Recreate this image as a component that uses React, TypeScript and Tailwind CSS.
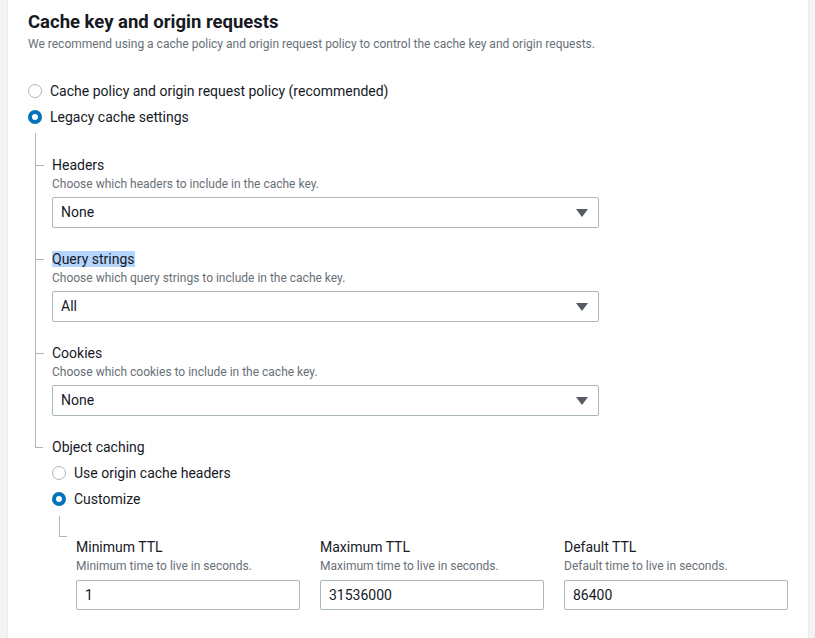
import React from 'react';

const font = { fontFamily: 'Roboto, "Liberation Sans", sans-serif' };

function Radio({ checked, label }: { checked?: boolean; label: string }) {
  return (
    <label className="flex items-center gap-2 h-5 text-[14px] text-[#16191f]">
      <span
        className={
          checked
            ? 'block w-[14px] h-[14px] rounded-full border-[4px] border-[#0073bb] bg-white'
            : 'block w-[14px] h-[14px] rounded-full border-[1.5px] border-[#aab7b8] bg-white'
        }
      />
      <span>{label}</span>
    </label>
  );
}

function Select({ value }: { value: string }) {
  return (
    <div className="mt-[5px] w-[547px] h-[31px] border border-[#aab7b8] rounded-[2px] flex items-center justify-between pl-2 pr-[10px] text-[14px] text-[#16191f]">
      <span>{value}</span>
      <svg width="12" height="8" viewBox="0 0 12 8">
        <path d="M0 0 H12 L6 8 Z" fill="#545b64" />
      </svg>
    </div>
  );
}

function TreeItem({
  label,
  desc,
  value,
  highlight,
}: {
  label: string;
  desc: string;
  value: string;
  highlight?: boolean;
}) {
  return (
    <div className="flex">
      <div className="w-[17px] border-l border-[#aab7b8] shrink-0">
        <div className="h-[10px]" />
        <div className="w-[8px] border-t border-[#aab7b8]" />
      </div>
      <div className="pb-[21px]">
        <div className="leading-5 text-[14px] text-[#16191f]">
          <span className={highlight ? 'bg-[#b4d5fe]' : ''}>{label}</span>
        </div>
        <div className="mt-px leading-4 text-[12px] text-[#687078]">{desc}</div>
        <Select value={value} />
      </div>
    </div>
  );
}

function TtlField({ label, desc, value }: { label: string; desc: string; value: string }) {
  return (
    <div>
      <div className="leading-5 text-[14px] text-[#16191f]">{label}</div>
      <div className="mt-px leading-4 text-[12px] text-[#687078]">{desc}</div>
      <div className="mt-[6px] h-[30px] border border-[#aab7b8] rounded-[2px] flex items-center pl-2 text-[14px] text-[#16191f]">
        {value}
      </div>
    </div>
  );
}

export default function App() {
  return (
    <div className="min-h-[638px] bg-[#f2f3f3] pl-[7px]" style={font}>
      <div className="w-[802px] min-h-[638px] bg-white border-l border-r border-[#eaeded] pl-[20px] pt-[11px]">
        <h2 className="text-[18.5px] leading-[22px] font-bold text-[#16191f]">Cache key and origin requests</h2>
        <p className="mt-[3px] text-[12px] leading-4 text-[#687078]">
          We recommend using a cache policy and origin request policy to control the cache key and origin requests.
        </p>

        <div className="mt-[29px] flex flex-col gap-[6px]">
          <Radio label="Cache policy and origin request policy (recommended)" />
          <Radio checked label="Legacy cache settings" />
        </div>

        <div className="ml-[7px] mt-[6px]">
          <div className="h-[22px] border-l border-[#aab7b8]" />
          <TreeItem label="Headers" desc="Choose which headers to include in the cache key." value="None" />
          <TreeItem
            label="Query strings"
            desc="Choose which query strings to include in the cache key."
            value="All"
            highlight
          />
          <TreeItem label="Cookies" desc="Choose which cookies to include in the cache key." value="None" />

          <div className="flex">
            <div className="w-[17px] shrink-0">
              <div className="h-[11px] w-[8px] border-l border-b border-[#aab7b8]" />
            </div>
            <div>
              <div className="leading-5 text-[14px] text-[#16191f]">Object caching</div>
              <div className="mt-[6px] flex flex-col gap-[6px]">
                <Radio label="Use origin cache headers" />
                <Radio checked label="Customize" />
              </div>
              <div className="ml-[7px] mt-[7px] flex">
                <div className="w-[17px] shrink-0">
                  <div className="h-[21px] w-[8px] border-l border-b border-[#aab7b8]" />
                </div>
                <div className="pt-[21px] grid grid-cols-[224px_224px_224px] gap-x-5">
                  <TtlField label="Minimum TTL" desc="Minimum time to live in seconds." value="1" />
                  <TtlField label="Maximum TTL" desc="Maximum time to live in seconds." value="31536000" />
                  <TtlField label="Default TTL" desc="Default time to live in seconds." value="86400" />
                </div>
              </div>
            </div>
          </div>
        </div>
      </div>
    </div>
  );
}
